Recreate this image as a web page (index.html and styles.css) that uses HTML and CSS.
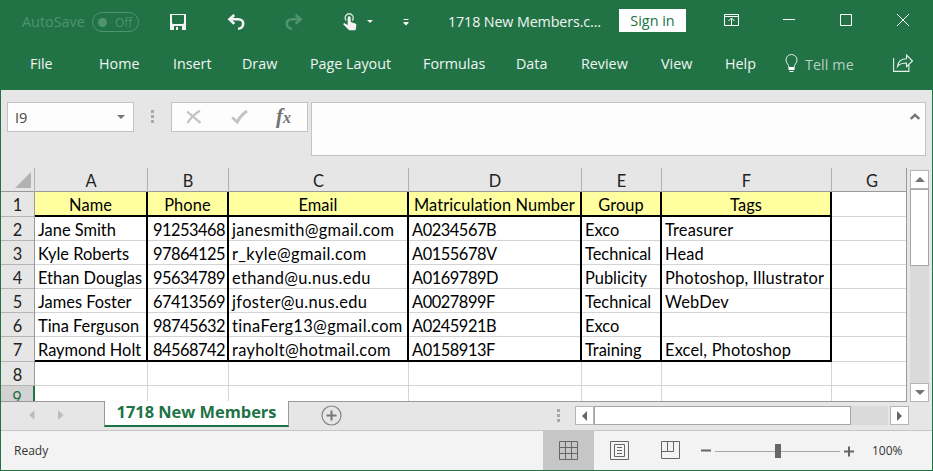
FILE: index.html
```html
<!DOCTYPE html>
<html lang="en">
<head>
<meta charset="utf-8">
<title>1718 New Members</title>
<link rel="stylesheet" href="styles.css">
</head>
<body>
<div class="window">
  <header class="ribbon">
    <div class="titlebar">
      <span class="autosave">AutoSave</span>
      <span class="toggle"><i class="knob"></i><span>Off</span></span>
      <svg class="ic-save" width="16" height="16" viewBox="0 0 16 16"><path fill="#f3f3f3" fill-rule="evenodd" d="M0 0h16v16H0zM2 1v8l1 1h10l1-1V1zM4 12v4h2v-3h2v3h4v-4z"/></svg>
      <svg class="ic-undo" width="18" height="16" viewBox="0 0 18 16"><path fill="none" stroke="#f3f3f3" stroke-width="2.600" d="M3 5.200h8.200c3 0 5 2 5 4.500 0 3-2.300 5-5.200 5"/><path fill="none" stroke="#f3f3f3" stroke-width="2.600" d="M7.300 .9 2.400 5.200l4.900 4.700"/></svg>
      <svg class="ic-redo" width="18" height="16" viewBox="0 0 18 16"><g fill="none" stroke="#4f9370" stroke-width="2.600"><path d="M15 5.200H6.800c-3 0-5 2-5 4.500 0 3 2.300 5 5.200 5"/><path d="M10.700 .9l4.900 4.300-4.900 4.700"/></g></svg>
      <svg class="ic-touch" width="14" height="18" viewBox="0 0 14 18"><path fill="none" stroke="#cfe0d6" stroke-width="1.500" d="M3.200 7.500a4 4 0 1 1 6 0"/><path fill="#f3f3f3" d="M4.700 4.700c0-2 3-2 3 0v4.200l4.500 1.500c1 .4 1.300 1 1.100 2L12.600 17.300H6.200L.4 11.600c-.5-.8.700-1.700 1.600-1.200l2.700 1.700z"/></svg>
      <svg class="ic-drop" width="6" height="3" viewBox="0 0 6 3"><path fill="#f3f3f3" d="M0 0h6L3 3z"/></svg>
      <svg class="ic-custom" width="6" height="7" viewBox="0 0 6 7"><path fill="#f3f3f3" d="M.5 0h5v1h-5zM.5 3h5v1L3 6.500.5 4z"/></svg>
      <span class="doc-title">1718 New Members.c...</span>
      <span class="signin">Sign in</span>
      <svg class="ic-ribbon" width="15" height="12" viewBox="0 0 15 12"><path fill="none" stroke="#fff" d="M.5.500h14v11H.500zM0 2.500h15M7.500 11V4.500M4.500 7l3-3 3 3"/></svg>
      <svg class="ic-min" width="12" height="12" viewBox="0 0 12 12"><path stroke="#fff" d="M0 5.500h12"/></svg>
      <svg class="ic-max" width="12" height="12" viewBox="0 0 12 12"><path fill="none" stroke="#fff" d="M.5.500h11v11H.500z"/></svg>
      <svg class="ic-close" width="12" height="12" viewBox="0 0 12 12"><path fill="none" stroke="#fff" d="M0 0l12 12M12 0 0 12"/></svg>
    </div>
    <nav class="tabs">
      <span class="t-file">File</span><span class="t-home">Home</span><span class="t-insert">Insert</span><span class="t-draw">Draw</span><span class="t-page">Page Layout</span><span class="t-formulas">Formulas</span><span class="t-data">Data</span><span class="t-review">Review</span><span class="t-view">View</span><span class="t-help">Help</span>
      <svg class="ic-bulb" width="13" height="18" viewBox="0 0 13 18"><path fill="none" stroke="#e4eee8" d="M4 13.500c0-3-3-4-3-7.500a5.500 5.500 0 0 1 11 0c0 3.500-3 4.500-3 7.500z"/><path fill="#fff" d="M3.500 13h6v3h-6zM4.500 17h4v1h-4z"/></svg>
      <span class="tellme">Tell me</span>
      <svg class="ic-share" width="21" height="18" viewBox="0 0 21 18"><path fill="none" stroke="#e9f1ec" stroke-width="1.100" d="M.6 4v13.400h15.300V11M4.500 12.500C5 7.500 8 4.800 13.500 4.700V1l6 6-6 5.700V9c-4.500 0-7 .8-9 3.500z"/></svg>
    </nav>
  </header>

  <section class="formula-row">
    <div class="namebox"><span>I9</span><svg width="8" height="4" viewBox="0 0 8 4"><path fill="#777" d="M0 0h8L4 4z"/></svg></div>
    <div class="dots"><i></i><i></i><i></i></div>
    <div class="fx-buttons">
      <svg class="fx-x" width="16" height="14" viewBox="0 0 16 14"><path fill="none" stroke="#c3c3c3" stroke-width="2.200" d="M1 1.500 14.500 12.800M14 .7C9 3.500 5 7.500 1.500 13"/></svg>
      <svg class="fx-check" width="17" height="14" viewBox="0 0 17 14"><path fill="none" stroke="#c3c3c3" stroke-width="3" d="M1.200 7.500l5 4.500C8.500 7.500 11.500 4 16 1"/></svg>
      <span class="fx">f<small>x</small></span>
    </div>
    <div class="formula"><svg width="10" height="7" viewBox="0 0 10 7"><path fill="none" stroke="#737373" stroke-width="2.400" d="M.8 6 5 2l4.200 4"/></svg></div>
  </section>

  <main class="workspace">
    <div class="sheet">
      <div class="row cols">
        <div class="corner"><svg width="16" height="16" viewBox="0 0 16 16"><path fill="#b2b2b2" d="M16 0v16H0z"/></svg></div>
        <div>A</div><div>B</div><div>C</div><div>D</div><div>E</div><div>F</div><div>G</div>
      </div>
      <div class="row heading tall"><b>1</b><div>Name</div><div>Phone</div><div>Email</div><div>Matriculation Number</div><div>Group</div><div>Tags</div><div></div></div>
      <div class="row data"><b>2</b><div>Jane Smith</div><div>91253468</div><div>janesmith@gmail.com</div><div>A0234567B</div><div>Exco</div><div>Treasurer</div><div></div></div>
      <div class="row data"><b>3</b><div>Kyle Roberts</div><div>97864125</div><div>r_kyle@gmail.com</div><div>A0155678V</div><div>Technical</div><div>Head</div><div></div></div>
      <div class="row data"><b>4</b><div>Ethan Douglas</div><div>95634789</div><div>ethand@u.nus.edu</div><div>A0169789D</div><div>Publicity</div><div>Photoshop, Illustrator</div><div></div></div>
      <div class="row data"><b>5</b><div>James Foster</div><div>67413569</div><div>jfoster@u.nus.edu</div><div>A0027899F</div><div>Technical</div><div>WebDev</div><div></div></div>
      <div class="row data"><b>6</b><div>Tina Ferguson</div><div>98745632</div><div>tinaFerg13@gmail.com</div><div>A0245921B</div><div>Exco</div><div></div><div></div></div>
      <div class="row data last tall"><b>7</b><div>Raymond Holt</div><div>84568742</div><div>rayholt@hotmail.com</div><div>A0158913F</div><div>Training</div><div>Excel, Photoshop</div><div></div></div>
      <div class="row"><b>8</b><div></div><div></div><div></div><div></div><div></div><div></div><div></div></div>
      <div class="row cut"><b>9</b><div></div><div></div><div></div><div></div><div></div><div></div><div></div></div>
    </div>
    <div class="vscroll">
      <div class="sbtn"><svg width="10" height="5" viewBox="0 0 10 5"><path fill="#737373" d="M0 5h10L5 0z"/></svg></div>
      <div class="vthumb"></div>
      <div class="sbtn"><svg width="10" height="5" viewBox="0 0 10 5"><path fill="#737373" d="M0 0h10L5 5z"/></svg></div>
    </div>
  </main>

  <section class="sheetbar">
    <svg class="nav-l" width="6" height="10" viewBox="0 0 6 10"><path fill="#bdbdbd" d="M5.500 0v10L0 5z"/></svg>
    <svg class="nav-r" width="6" height="10" viewBox="0 0 6 10"><path fill="#bdbdbd" d="M0 0v10l5.500-5z"/></svg>
    <div class="sheet-tab"><span>1718 New Members</span></div>
    <svg class="ic-add" width="21" height="21" viewBox="0 0 21 21"><circle cx="10.500" cy="10.500" r="9.500" fill="none" stroke="#868686" stroke-width="1.200"/><path stroke="#777" stroke-width="2" d="M5.500 10.500h10M10.500 5.500v10"/></svg>
    <div class="dots"><i></i><i></i><i></i></div>
    <div class="sbtn"><svg width="5" height="10" viewBox="0 0 5 10"><path fill="#666" d="M5 0v10L0 5z"/></svg></div>
    <div class="hthumb"></div><div class="htrack"></div>
    <div class="sbtn right"><svg width="5" height="10" viewBox="0 0 5 10"><path fill="#666" d="M0 0v10l5-5z"/></svg></div>
  </section>

  <footer class="status">
    <span class="ready">Ready</span>
    <div class="view active"><svg width="19" height="19" viewBox="0 0 19 19"><path fill="none" stroke="#666" d="M.5.500h18v18H.500zM6.500 0v19M12.500 0v19M0 6.500h19M0 12.500h19"/></svg></div>
    <div class="view"><svg width="19" height="19" viewBox="0 0 19 19"><path fill="none" stroke="#666" d="M.5.500h18v18H.500zM4.500 3.500h10v12h-10zM7 6.500h5M7 9.500h5M7 12.500h5"/></svg></div>
    <div class="view"><svg width="19" height="19" viewBox="0 0 19 19"><path fill="none" stroke="#666" d="M.5.500h18v17H.500zM.5 10.500h12V.500M6.500 0v10"/></svg></div>
    <svg class="zoom" width="155" height="14" viewBox="0 0 155 14"><path fill="#666" d="M1 5.500h10v2H1zM144 6.500h10v2h-10zM148 2.500h2v10h-2z"/><path stroke="#a6a6a6" d="M15 7.500h125"/><path fill="#666" d="M75 0h6v14h-6z"/></svg>
    <span class="pct">100%</span>
  </footer>
</div>
</body>
</html>
```
FILE: styles.css
```css
* { box-sizing: border-box; }
body {
  margin: 0;
  font-family: "Open Sans", "Noto Sans", sans-serif;
}
svg { display: block; flex: none; }
.window {
  width: 933px;
  height: 471px;
  display: flex;
  flex-direction: column;
  overflow: hidden;
  background: #e6e6e6;
  border: 1px solid #217346;
  border-top: 0;
  white-space: nowrap;
}

/* Title bar and ribbon tabs */
.ribbon { height: 90px; flex: none; background: #217346; color: #f1f6f3; }
.titlebar { display: flex; height: 44px; align-items: flex-start; }
.titlebar > * { flex: none; }
.autosave { width: 64px; margin: 12px 0 0 21px; font-size: 14.4px; line-height: 20px; color: #4f9370; }
.toggle {
  display: flex; align-items: center;
  width: 47px; height: 20px; margin: 12px 0 0 6px; padding-left: 5px;
  border: 1px solid #4f9370; border-radius: 10px;
  color: #4f9370; font-size: 12px;
}
.knob { width: 9px; height: 9px; margin-right: 8px; border-radius: 50%; background: #4f9370; }
.ic-save { margin: 14px 0 0 31px; }
.ic-undo { margin: 14px 0 0 41px; }
.ic-redo { margin: 14px 0 0 40px; }
.ic-touch { margin: 13px 0 0 40px; }
.ic-drop { margin: 20px 0 0 10px; }
.ic-custom { margin: 19px 0 0 30px; }
.doc-title { width: 152px; margin: 12px 0 0 39px; font-size: 14.3px; line-height: 20px; letter-spacing: -.12px; }
.signin {
  width: 67px; height: 23px; margin: 9px 0 0 19px;
  background: #fff; color: #217346; font-size: 14.4px; line-height: 23px; text-align: center;
}
.ic-ribbon { margin: 14px 0 0 38px; }
.ic-min { margin: 14px 0 0 44px; }
.ic-max { margin: 14px 0 0 45px; }
.ic-close { margin: 14px 0 0 45px; }

.tabs { display: flex; height: 38px; align-items: center; font-size: 14.3px; }
.tabs > * { flex: none; }
.t-file { width: 69px; margin-left: 29px; }
.t-home { width: 74px; }
.t-insert { width: 69px; }
.t-draw { width: 68px; }
.t-page { width: 113px; }
.t-formulas { width: 93px; }
.t-data { width: 65px; }
.t-review { width: 80px; }
.t-view { width: 64px; }
.t-help { width: 60px; }
.tellme { width: 50px; margin: 2px 0 0 7px; color: #b5d0c1; letter-spacing: .1px; }
.ic-share { margin-left: 38px; }

/* Name box and formula bar */
.formula-row { display: flex; height: 78px; flex: none; padding: 12px 0 0 6px; }
.namebox, .fx-buttons, .formula { background: #fdfdfd; border: 1px solid #c3c3c3; }
.namebox {
  width: 127px; height: 30px; padding: 0 8px 0 7px;
  display: flex; align-items: center; justify-content: space-between;
  font-size: 14.5px; color: #444;
}
.dots { width: 3px; margin: 8px 0 0 17px; }
.dots i { display: block; width: 3px; height: 3px; margin-bottom: 2px; background: #a9a9a9; }
.fx-buttons { display: flex; width: 137px; height: 30px; margin-left: 17px; }
.fx-x { margin: 7px 0 0 14px; }
.fx-check { margin: 7px 0 0 29px; }
.fx { margin: 2px 0 0 28px; font: italic bold 21px/23px "Liberation Serif", serif; color: #737373; }
.fx small { font-size: 16px; }
.formula { width: 615px; height: 54px; margin-left: 3px; display: flex; justify-content: flex-end; padding: 10px 5px 0 0; }

/* Grid */
.workspace { display: flex; height: 234px; flex: none; }
.sheet { width: 906px; height: 234px; overflow: hidden; border-right: 1px solid #999; border-bottom: 1px solid #999; }
.row {
  display: grid;
  grid-template-columns: 34px 113px 81px 180px 173px 80px 170px 75px;
  grid-template-rows: 100%;
  height: 24px;
  font: 16.4px/25px Lato, "Noto Sans", sans-serif;
  font-variant-ligatures: none;
  color: #000;
}
.row.tall { height: 25px; }
.row > div { background: #fff; border-right: 1px solid #d4d4d4; box-shadow: inset 0 -1px #d4d4d4; }
.row > div:last-child { border-right: 0; }
.row > b {
  font-weight: 400; text-align: center; color: #222; background: #e6e6e6;
  border-right: 1px solid #999; box-shadow: inset 0 -1px #b5b5b5;
}
.row.cols > div {
  background: #e6e6e6; text-align: center; color: #222;
  border-right-color: #b0b0b0; box-shadow: inset 0 -1px #999;
}
.row.cols > div:last-child { padding-left: 5px; }
.row.cols .corner { display: flex; padding: 4px 0 0 14px; }
.heading > div { letter-spacing: .1px; }
.heading > div:not(:last-child) { background: #ffff9f; border-right: 2px solid #000; box-shadow: inset 0 -2px #000; text-align: center; }
.data > div { padding-left: 3px; }
.data > div:not(:last-child) { border-right: 2px solid #000; }
.data > div:nth-child(3) { text-align: right; padding-right: 2px; letter-spacing: -.5px; }
.data > div:nth-child(4) { letter-spacing: .36px; }
.data > div:nth-child(5) { letter-spacing: -.45px; }
.data > div:nth-child(7) { letter-spacing: .18px; }
.last > div:not(:last-child) { box-shadow: inset 0 -2px #000; }
.cut > b { background: #d2d2d2; color: #217346; border-right: 2px solid #217346; line-height: 23px; }
.vscroll { width: 19px; margin: 2px 0 0 3px; display: flex; flex-direction: column; background: #dadada; height: 232px; }
.sbtn { width: 19px; height: 19px; flex: none; display: flex; align-items: center; justify-content: center; background: #fff; border: 1px solid #b5b5b5; }
.vthumb { height: 77px; background: #fff; border: 1px solid #a6a6a6; margin-bottom: auto; }

/* Sheet tabs and horizontal scroll */
.sheetbar { display: flex; height: 29px; flex: none; border-bottom: 1px solid #c6c6c6; }
.nav-l { margin: 8px 0 0 28px; }
.nav-r { margin: 8px 0 0 23px; }
.sheet-tab {
  width: 185px; height: 26px; margin: -1px 0 0 40px; position: relative;
  background: #fff; border: 1px solid #999; border-top: 0; border-bottom: 2px solid #217346;
  color: #217346; font-size: 16.4px; font-weight: 700; line-height: 22px; text-align: center;
}
.ic-add { margin: 3px 0 0 32px; }
.sheetbar .dots { margin: 7px 0 0 215px; }
.sheetbar .sbtn { margin: 4px 0 0 15px; }
.hthumb { width: 257px; height: 19px; margin-top: 4px; background: #fff; border: 1px solid #a6a6a6; }
.htrack { width: 37px; height: 19px; margin-top: 4px; background: #dadada; }
.sheetbar .sbtn.right { margin-left: 2px; }

/* Status bar */
.status { display: flex; flex: 1; align-items: center; background: #f3f3f3; color: #333; font-size: 12px; }
.ready { width: 529px; margin-left: 13px; }
.view { width: 51px; height: 100%; flex: none; display: flex; justify-content: center; padding-top: 10px; }
.view.active { background: #c6c6c6; }
.zoom { margin-left: 4px; }
.pct { margin-left: 17px; }
```
